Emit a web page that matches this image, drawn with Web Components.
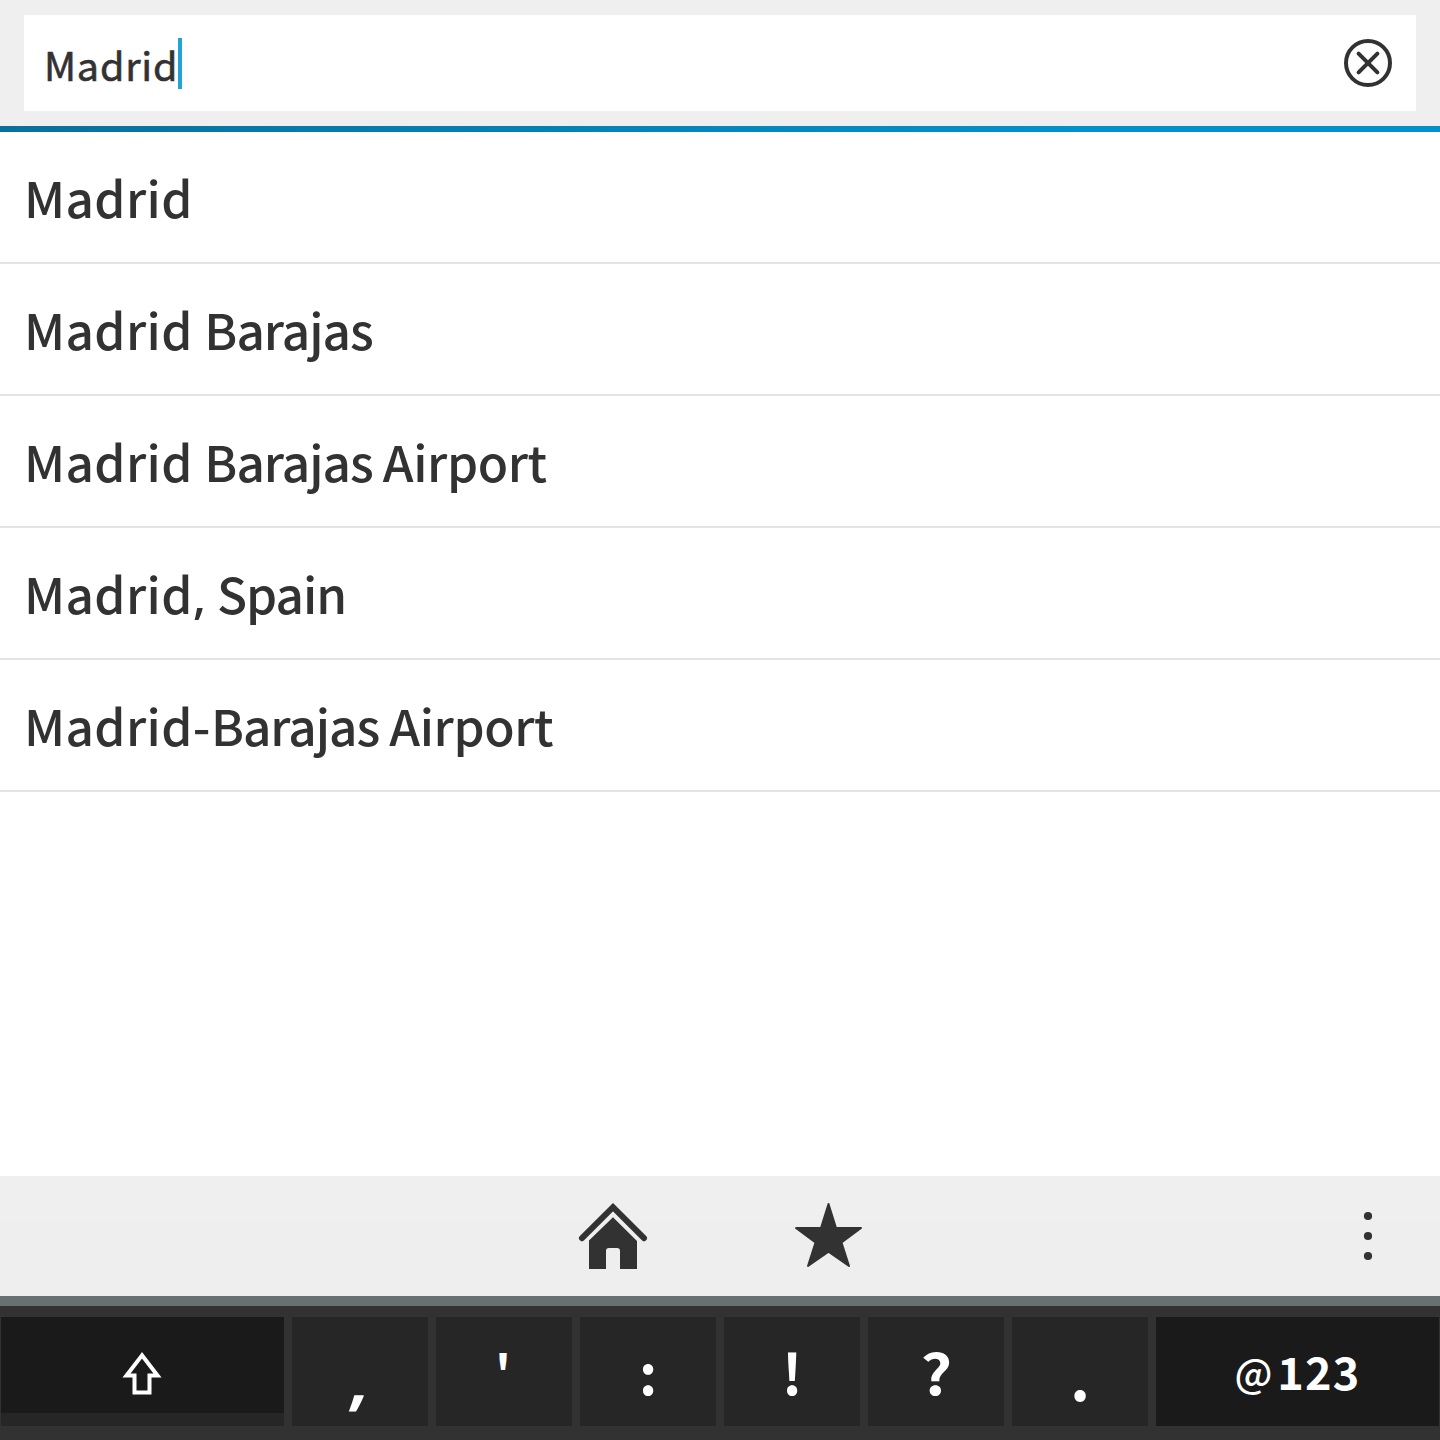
<!DOCTYPE html>
<html lang="en">
<head>
<meta charset="utf-8">
<title>Search</title>
<style>
html,body{margin:0;padding:0;background:#fff}
body{font-family:"Noto Sans CJK SC","Noto Sans",sans-serif;font-weight:500;color:#323232}
</style>
</head>
<body>
<search-screen></search-screen>
<script>
const define = (name, html) => customElements.define(name, class extends HTMLElement {
  constructor() {
    super();
    const t = document.createElement('template');
    t.innerHTML = html;
    this.attachShadow({ mode: 'open' }).append(t.content.cloneNode(true));
  }
});

define('search-bar', `
<style>
:host{display:block;box-sizing:border-box;height:132px;padding:15px 24px 0;background:linear-gradient(90deg,#08709c,#0092cc 75%,#0092cc) 0 126px/100% 6px no-repeat,#efefef}
.field{display:flex;align-items:center;box-sizing:border-box;height:96px;background:#fff;padding:0 24px 0 20px}
.text{font-size:39.5px;line-height:60px;font-weight:400;-webkit-text-stroke:.6px #323232;letter-spacing:.8px;width:134px;white-space:nowrap;padding-top:1px}
.caret{width:4px;height:51px;background:#22a3d6;margin-top:1px}
svg{margin-left:auto}
</style>
<div class="field"><span class="text"><slot></slot></span><i class="caret"></i>
<svg width="48" height="48" viewBox="0 0 48 48" fill="none" stroke="#323232" stroke-width="4" stroke-linecap="round"><circle cx="24" cy="24" r="22"/><path d="M14.6 14.6 33.4 33.4M33.4 14.6 14.6 33.4"/></svg></div>`);

define('result-row', `
<style>
:host{display:flex;align-items:center;box-sizing:border-box;height:132px;border-bottom:2px solid #e4e4e4;padding:0 0 1px 24px;font-size:49.5px;line-height:74px;letter-spacing:.4px;white-space:pre}
</style>
<span><slot></slot></span>`);

define('action-bar', `
<style>
:host{display:grid;grid-template-columns:505px 216px 215px 432px 72px;height:120px;background:linear-gradient(#efefef 46px,#eee 46px)}
svg{display:block;height:120px;width:216px}
.menu{width:144px;margin-left:-72px}
</style>
<i></i>
<svg viewBox="505 1176 216 120" fill="#323232"><path d="M582 1238.200 613 1207.200 644 1238.200" fill="none" stroke="#323232" stroke-width="6" stroke-linecap="round"/><path d="M589 1240.500 613 1217.300 637 1241V1269H620V1251Q620 1248 617 1248H609Q606 1248 606 1251V1269H589Z"/></svg>
<svg viewBox="721 1176 216 120" fill="#323232" stroke="#323232" stroke-width="2" stroke-linejoin="round"><path d="M828.500 1204 836 1228H861L841.500 1242.500 849 1266 828.500 1251.800 808 1266 815.500 1242.500 796 1228H821Z"/></svg>
<i></i>
<svg class="menu" viewBox="1296 1176 144 120" fill="#323232"><circle cx="1368" cy="1216" r="4.100"/><circle cx="1368" cy="1236" r="4.100"/><circle cx="1368" cy="1256" r="4.100"/></svg>`);

define('key-cap', `
<style>
:host{display:flex;justify-content:center;box-sizing:border-box;background:#262626;color:#fff;font-weight:700;font-size:var(--fs,56px);line-height:80px;height:109px;padding-top:var(--top,0);padding-left:var(--left,0);padding-right:var(--right,0);white-space:nowrap}
:host([wide]){background:#1a1a1a}
:host([split]){background:linear-gradient(#1a1a1a 96px,#262626 96px)}
</style>
<slot></slot>`);

define('key-board', `
<style>
:host{display:grid;grid-template-columns:283px repeat(6,136px) 283px;column-gap:8px;box-sizing:border-box;height:144px;border-top:10px solid #687073;background:#323232;padding:11px 1px 0}
.at{font-size:39px;font-weight:500}
.num{letter-spacing:1.2px;margin-left:5px}
.comma{display:block;font-family:"Noto Sans",sans-serif;transform:skewX(-8deg)}
.query{display:block;transform:scaleX(1.1)}
</style>
<key-cap wide split style="--right:2px"><svg width="40" height="46" viewBox="0 0 40 46" fill="none" stroke="#fff" stroke-width="4" style="margin-top:33px"><path d="M20 5.400 4.500 25.500H12.500V42.500H27.500V25.500H35.500Z"/></svg></key-cap>
<key-cap style="--fs:66px;--top:20px"><span class="comma">,</span></key-cap>
<key-cap style="--fs:48px;--top:12px;--right:2px">'</key-cap>
<key-cap style="--fs:56px;--top:14px">:</key-cap>
<key-cap style="--top:14px">!</key-cap>
<key-cap style="--top:14px"><span class="query">?</span></key-cap>
<key-cap style="--fs:62px;--top:17px">.</key-cap>
<key-cap wide style="--fs:45px;--top:14px"><span class="at">@</span><span class="num">123</span></key-cap>`);

define('search-screen', `
<style>
:host{display:flex;flex-direction:column;width:1440px;height:1440px;overflow:hidden;background:#fff}
.list{flex:1}
.n{letter-spacing:-1px}
.a{letter-spacing:-.4px}
.c{font-family:"Noto Sans",sans-serif;line-height:0}
</style>
<search-bar>Madrid</search-bar>
<div class="list">
<result-row>Madrid</result-row>
<result-row>Madrid <span class="n">Barajas</span></result-row>
<result-row>Madrid <span class="n">Barajas </span><span class="a">Airport</span></result-row>
<result-row>Madrid<span class="c">,</span><span class="n"> Spain</span></result-row>
<result-row>Madrid-<span class="n">Barajas </span><span class="a">Airport</span></result-row>
</div>
<action-bar></action-bar>
<key-board></key-board>`);
</script>
</body>
</html>
